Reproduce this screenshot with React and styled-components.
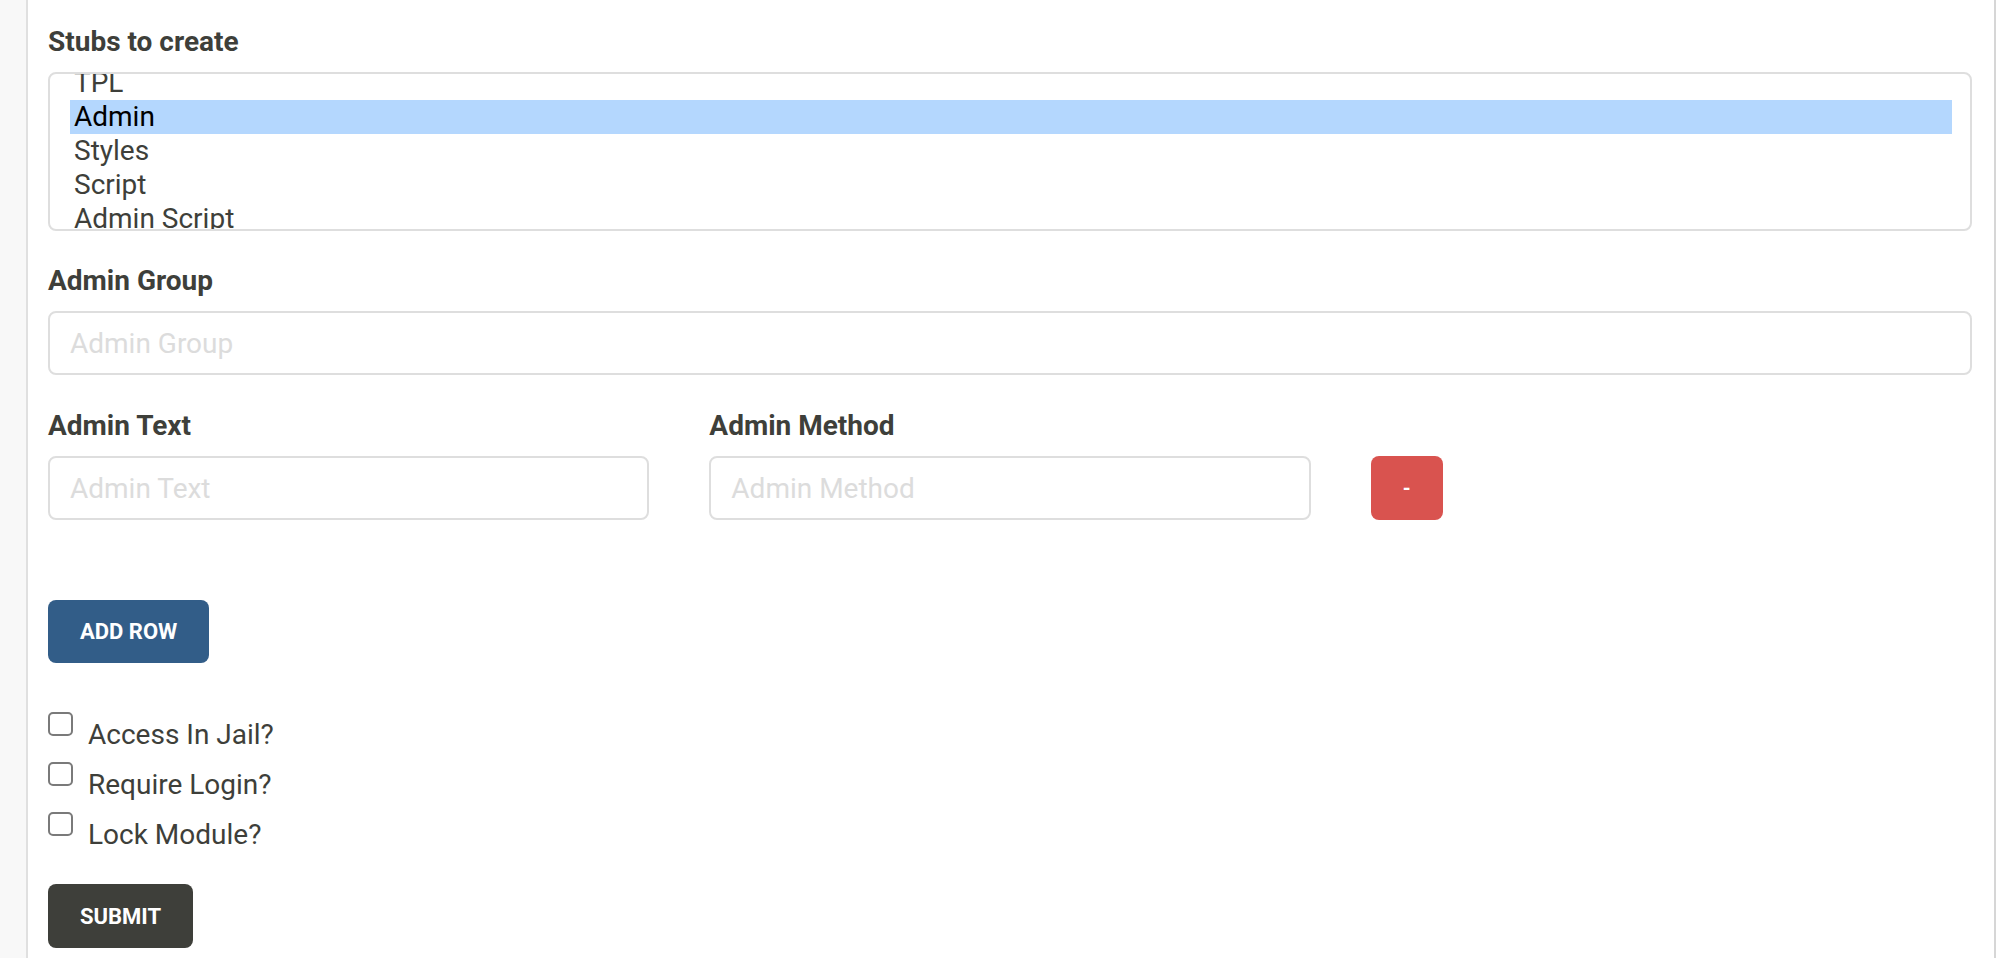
import React, { useState } from 'react';
import styled, { createGlobalStyle } from 'styled-components';

const GlobalStyle = createGlobalStyle`
  html, body {
    margin: 0;
    padding: 0;
    background: #ffffff;
  }
  body {
    font-family: Roboto, "Liberation Sans", Arial, sans-serif;
    color: #3e3f3a;
  }
`;

const Page = styled.div`
  display: flex;
  height: 100vh;
  overflow: hidden;
`;

const Sidebar = styled.div`
  width: 26px;
  flex: none;
  background: #f8f8f8;
  border-right: 2px solid #e0e0e0;
`;

const Main = styled.div`
  flex: 1;
  padding: 22px 22px 0 20px;
  border-right: 2px solid #d6d6d6;
`;

const FormGroup = styled.div`
  margin-bottom: ${(p) => p.mb ?? 30}px;
`;

const Label = styled.label`
  display: block;
  font-size: 28px;
  line-height: 40px;
  font-weight: 700;
  color: #3e3f3a;
  margin-bottom: 10px;
`;

const ListBox = styled.div`
  height: 155px;
  border: 2px solid #dedede;
  border-radius: 8px;
  padding: 0 18px 0 20px;
  overflow: hidden;
  background: #fff;
`;

const Option = styled.div`
  height: 34px;
  line-height: 34px;
  padding-left: 4px;
  font-size: 28px;
  color: ${(p) => (p.selected ? '#000' : '#3e3f3a')};
  background: ${(p) => (p.selected ? '#b4d7fe' : 'transparent')};
  white-space: nowrap;
`;

const Input = styled.input`
  display: block;
  box-sizing: border-box;
  width: 100%;
  height: 64px;
  border: 2px solid #dedede;
  border-radius: 8px;
  padding: 0 20px;
  font-family: inherit;
  font-size: 28px;
  color: #3e3f3a;
  outline: none;

  &::placeholder {
    color: #dcdcdc;
  }
`;

const Row = styled.div`
  display: grid;
  grid-template-columns: repeat(3, 1fr);
  column-gap: 60px;
  align-items: end;
  margin-bottom: 80px;
`;

const Button = styled.button`
  display: inline-block;
  height: ${(p) => p.h ?? 63}px;
  padding: 0 32px;
  border: none;
  border-radius: 8px;
  background: ${(p) => p.bg};
  color: #fff;
  font-family: inherit;
  font-size: 22px;
  font-weight: 700;
  text-transform: uppercase;
  cursor: pointer;
`;

const RemoveButton = styled(Button)`
  justify-self: start;
  width: 72px;
  padding: 0;
  font-size: 20px;
`;

const Checks = styled.div`
  margin-top: 49px;
  margin-bottom: 32px;
`;

const CheckRow = styled.label`
  display: flex;
  align-items: flex-start;
  height: 40px;
  margin-bottom: 10px;
  font-size: 28px;
  color: #3e3f3a;

  &:last-child {
    margin-bottom: 0;
  }
`;

const CheckText = styled.span`
  line-height: 46px;
`;

const Box = styled.input`
  appearance: none;
  flex: none;
  box-sizing: border-box;
  width: 25px;
  height: 24px;
  margin: 0 15px 0 0;
  border: 2px solid #7a7a7a;
  border-radius: 5px;
  background: #fff;

  &:checked {
    background: #325d88;
    border-color: #325d88;
  }
`;

const stubs = ['Module', 'Controller', 'TPL', 'Admin', 'Styles', 'Script', 'Admin Script', 'Language'];

const options = [
  { key: 'jail', text: 'Access In Jail?' },
  { key: 'login', text: 'Require Login?' },
  { key: 'lock', text: 'Lock Module?' },
];

export default function App() {
  const [selected, setSelected] = useState('Admin');
  const [checks, setChecks] = useState({ jail: false, login: false, lock: false });

  const toggle = (key) => setChecks((c) => ({ ...c, [key]: !c[key] }));

  return (
    <Page>
      <GlobalStyle />
      <Sidebar />
      <Main>
        <FormGroup>
          <Label>Stubs to create</Label>
          <ListBox
            ref={(el) => {
              if (el) el.scrollTop = 76;
            }}
          >
            {stubs.map((s) => (
              <Option key={s} selected={s === selected} onClick={() => setSelected(s)}>
                {s}
              </Option>
            ))}
          </ListBox>
        </FormGroup>

        <FormGroup mb={31}>
          <Label>Admin Group</Label>
          <Input placeholder="Admin Group" />
        </FormGroup>

        <Row>
          <div>
            <Label>Admin Text</Label>
            <Input placeholder="Admin Text" />
          </div>
          <div>
            <Label>Admin Method</Label>
            <Input placeholder="Admin Method" />
          </div>
          <RemoveButton h={64} bg="#d9534f">-</RemoveButton>
        </Row>

        <Button bg="#325d88">Add Row</Button>

        <Checks>
          {options.map((o) => (
            <CheckRow key={o.key}>
              <Box type="checkbox" checked={checks[o.key]} onChange={() => toggle(o.key)} />
              <CheckText>{o.text}</CheckText>
            </CheckRow>
          ))}
        </Checks>

        <Button bg="#3e3f3a" h={64}>Submit</Button>
      </Main>
    </Page>
  );
}
